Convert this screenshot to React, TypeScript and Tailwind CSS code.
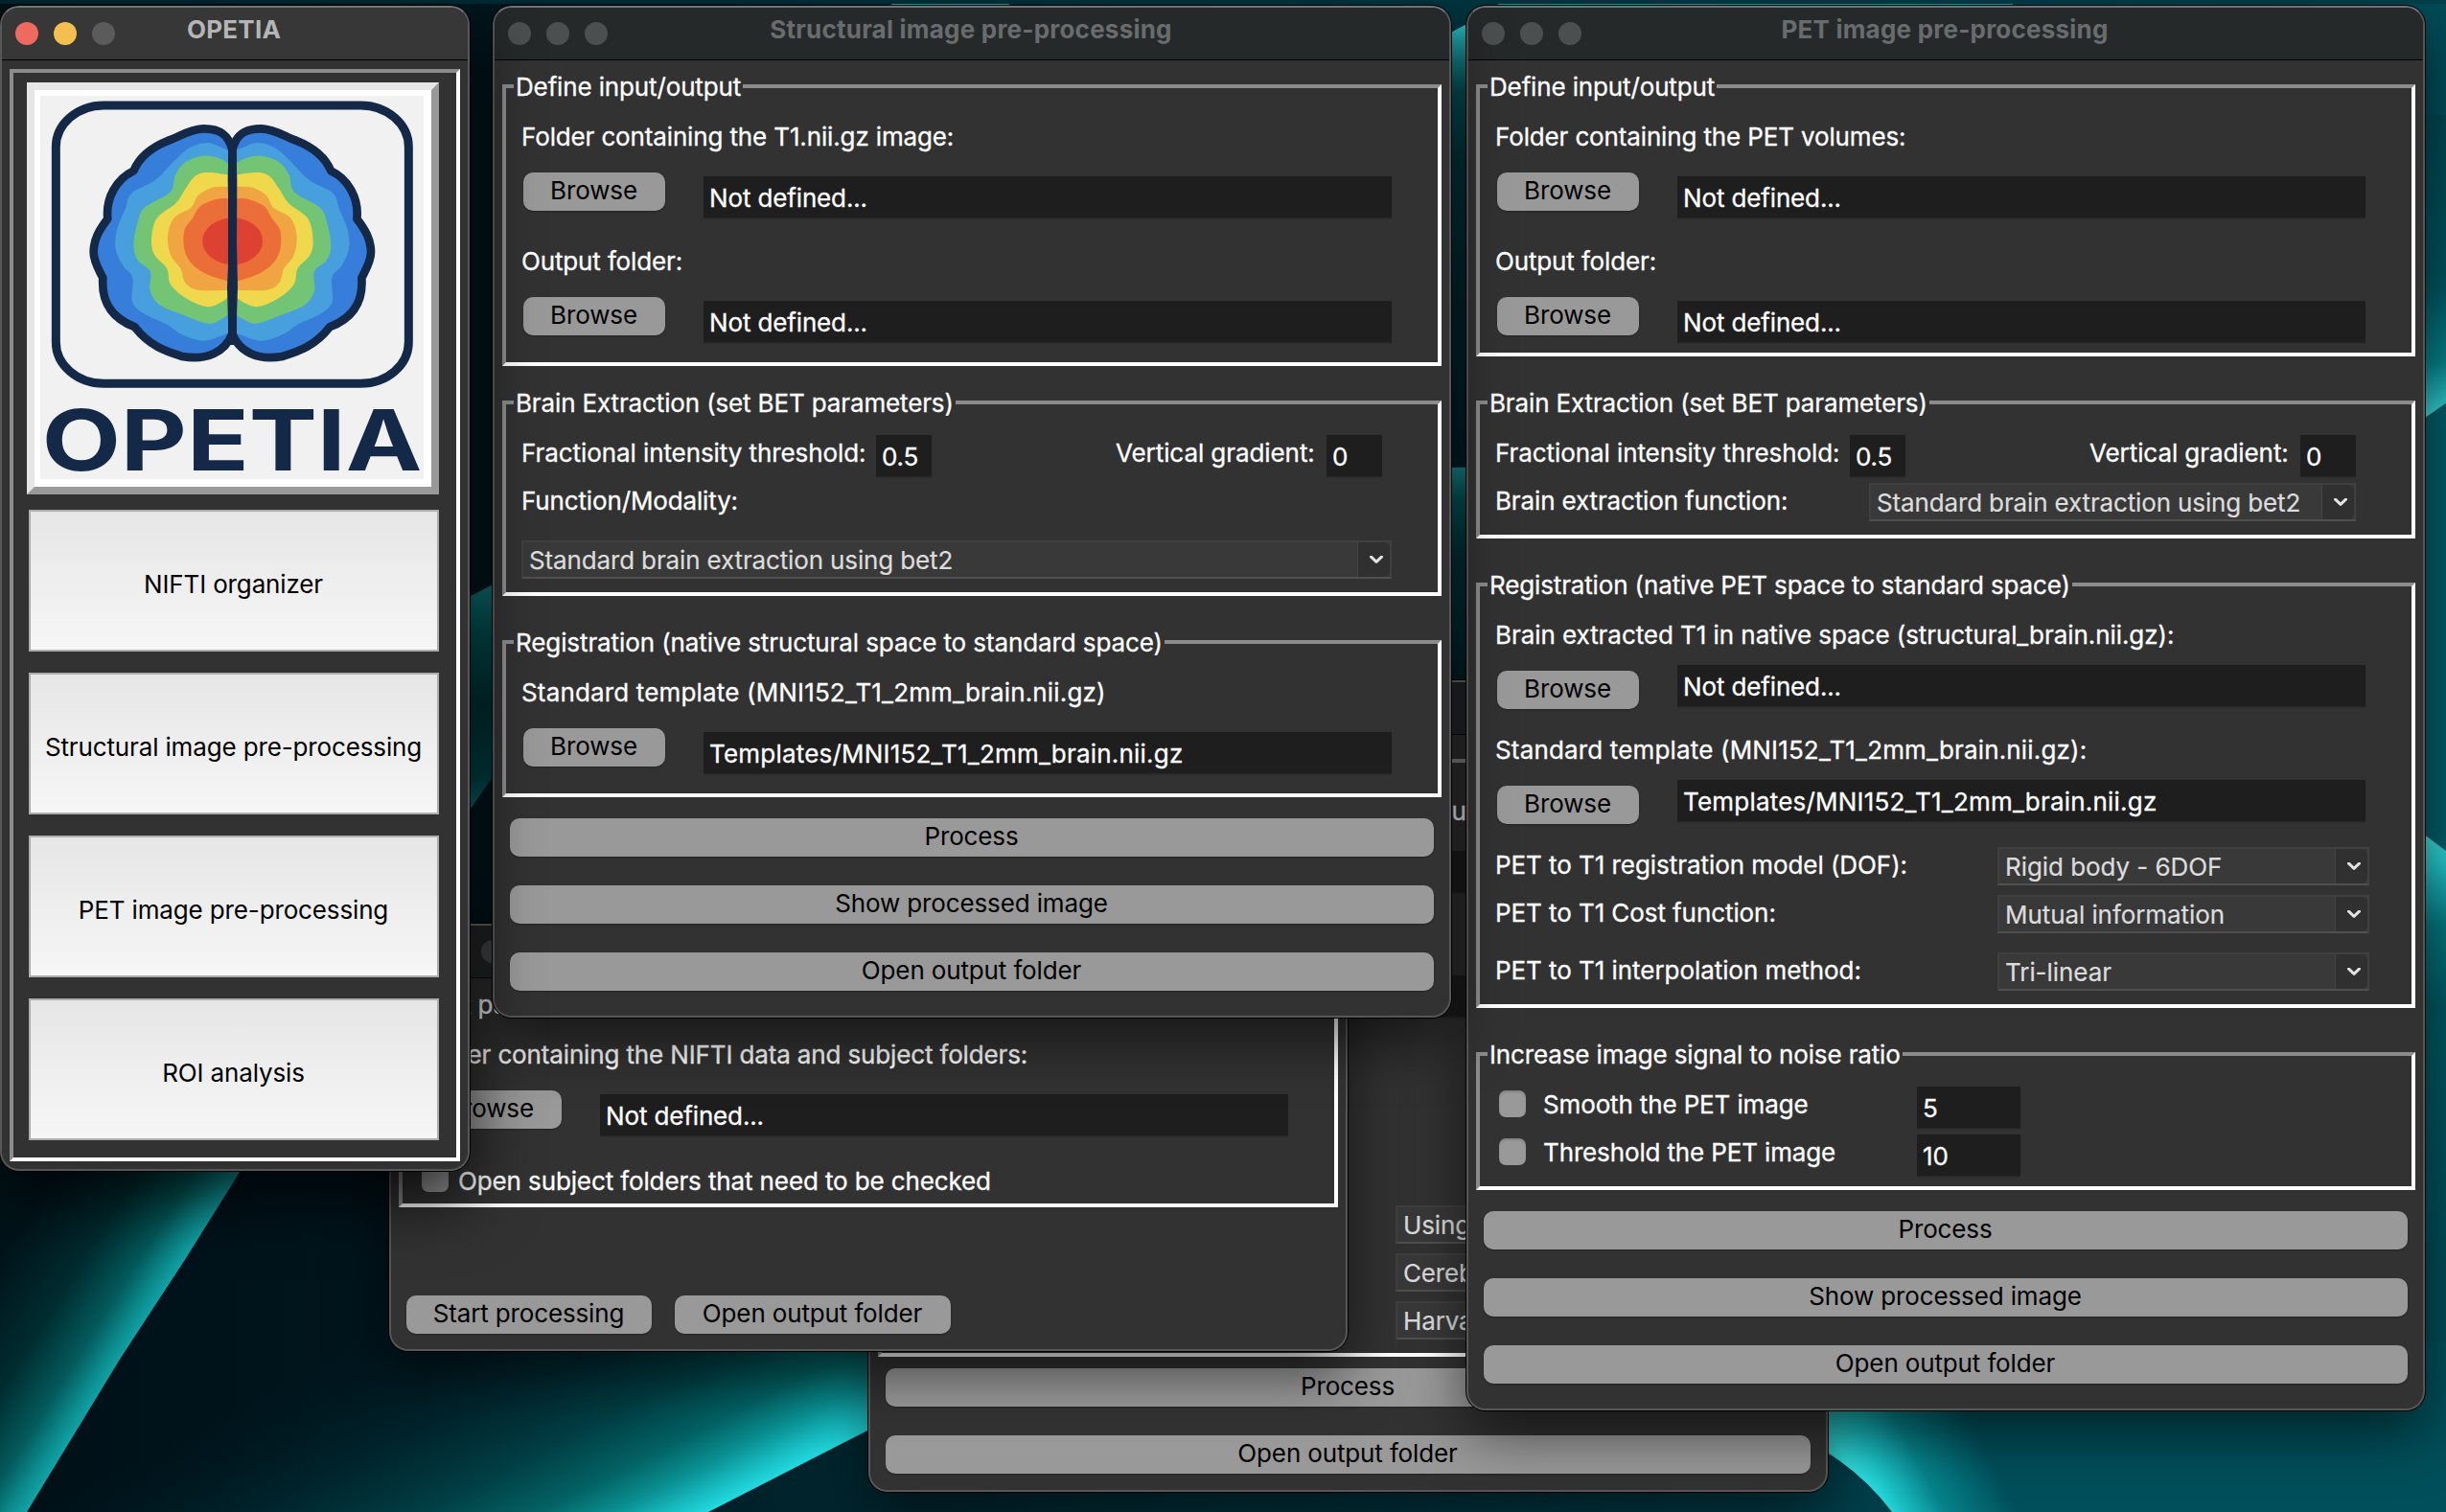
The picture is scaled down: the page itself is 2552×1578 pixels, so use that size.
import type { ReactNode } from "react";

type Pt = [number, number];

/* ---------- Logo ---------- */

const AXIS = 727;

/** Left-half contour points mirrored about the axis and joined by a Catmull-Rom curve. */
function contour(left: Pt[]): string {
  const right = left.map(([x, y]) => [2 * AXIS - x, y] as Pt).reverse();
  const p = [...left, ...right];
  const n = p.length;
  let d = `M${p[0][0]} ${p[0][1]}`;
  for (let i = 0; i < n; i++) {
    const a = p[(i - 1 + n) % n];
    const b = p[i];
    const c = p[(i + 1) % n];
    const e = p[(i + 2) % n];
    d += `C${b[0] + (c[0] - a[0]) / 6} ${b[1] + (c[1] - a[1]) / 6} ${c[0] - (e[0] - b[0]) / 6} ${c[1] - (e[1] - b[1]) / 6} ${c[0]} ${c[1]}`;
  }
  return d + "Z";
}

const LAYERS: { fill: string; points: Pt[] }[] = [
  { fill: "#479fdd", points: [[715, 470], [650, 447], [590, 465], [545, 505], [485, 565], [412, 605], [392, 655], [366, 720], [362, 780], [385, 832], [415, 870], [414, 945], [450, 982], [520, 1015], [570, 1048], [640, 1067], [712, 1045]] },
  { fill: "#74c476", points: [[720, 515], [690, 497], [635, 488], [580, 508], [549, 548], [532, 602], [452, 650], [430, 700], [418, 770], [432, 815], [470, 850], [470, 910], [500, 955], [570, 985], [650, 1013], [695, 998], [720, 980]] },
  { fill: "#efd84b", points: [[720, 548], [650, 540], [610, 552], [580, 592], [550, 637], [490, 685], [474, 755], [485, 800], [522, 840], [534, 890], [580, 932], [645, 960], [690, 948], [720, 928]] },
  { fill: "#f0a442", points: [[720, 584], [665, 587], [620, 612], [598, 650], [545, 682], [525, 740], [535, 800], [565, 840], [580, 885], [620, 908], [720, 908]] },
  { fill: "#eb6d37", points: [[720, 622], [680, 623], [628, 645], [603, 683], [577, 722], [578, 785], [605, 830], [655, 862], [720, 882]] },
];

const HEMI =
  "M727 470C715 415 680 402 635 403C590 405 560 430 525 441C465 465 435 495 418 535C365 560 330 620 337 685C310 720 293 750 293 790C293 820 310 845 322 870C318 930 335 990 422 1024C470 1085 520 1100 570 1116C650 1130 705 1100 727 1045Z";

function Logo() {
  return (
    <svg viewBox="126 300 1200 1200" className="block size-[400px] overflow-visible bg-[#f1f1f1]">
      <rect x="175" y="330" width="1104" height="871" rx="150" ry="130" fill="none" stroke="#142848" strokeWidth="27" />
      {["", "matrix(-1 0 0 1 1454 0)"].map((t) => (
        <path key={t} d={HEMI} transform={t} fill="#377edb" />
      ))}
      {LAYERS.map((l) => (
        <path key={l.fill} d={contour(l.points)} fill={l.fill} />
      ))}
      <ellipse cx="728" cy="755" rx="94" ry="73" fill="#dc4132" />
      {["", "matrix(-1 0 0 1 1454 0)"].map((t) => (
        <path key={t} d={HEMI} transform={t} fill="none" stroke="#142848" strokeWidth="26" strokeLinejoin="round" />
      ))}
      <path d="M716 440H738L742 560L741 760L744 900L738 1080H716L711 900L717 760L713 560Z" fill="#142848" />
      <text x="131" y="1474" textLength="1190" lengthAdjust="spacingAndGlyphs" fontSize="264" fontWeight="700" fill="#142848" className="font-['Inter',sans-serif]">
        OPETIA
      </text>
    </svg>
  );
}

/* ---------- Wallpaper ---------- */

function Wallpaper() {
  return (
    <svg className="absolute inset-0 size-full" viewBox="0 0 2552 1578" preserveAspectRatio="none">
      <defs>
        <linearGradient id="base" x1="0" y1="0" x2="1" y2="0">
          <stop offset="0" stopColor="#001017" />
          <stop offset=".22" stopColor="#001820" />
          <stop offset=".36" stopColor="#002730" />
          <stop offset=".58" stopColor="#003540" />
          <stop offset="1" stopColor="#004c58" />
        </linearGradient>
        <linearGradient id="menu" x1="0" y1="0" x2="1" y2="0">
          <stop offset="0" stopColor="#00262f" />
          <stop offset="1" stopColor="#00424c" />
        </linearGradient>
        <linearGradient id="leftGlow" gradientUnits="userSpaceOnUse" x1="140" y1="1400" x2="0" y2="1312">
          <stop offset="0" stopColor="#12a5a8" />
          <stop offset=".1" stopColor="#0b8a8c" />
          <stop offset=".25" stopColor="#045a5c" />
          <stop offset=".55" stopColor="#002c30" />
          <stop offset="1" stopColor="#00141a" />
        </linearGradient>
        <linearGradient id="midGlow" gradientUnits="userSpaceOnUse" x1="822" y1="1536" x2="674" y2="1247">
          <stop offset="0" stopColor="#22dbe0" />
          <stop offset=".06" stopColor="#17bcc1" />
          <stop offset=".14" stopColor="#0a9092" />
          <stop offset=".25" stopColor="#036264" />
          <stop offset=".42" stopColor="#003f44" />
          <stop offset=".65" stopColor="#002830" stopOpacity=".85" />
          <stop offset="1" stopColor="#001820" stopOpacity="0" />
        </linearGradient>
        <linearGradient id="rightGlow" gradientUnits="userSpaceOnUse" x1="1940" y1="1552" x2="2060" y2="1490">
          <stop offset="0" stopColor="#35f2f2" />
          <stop offset=".2" stopColor="#1cc4c8" />
          <stop offset=".5" stopColor="#06828a" />
          <stop offset="1" stopColor="#004f5a" />
        </linearGradient>
        <linearGradient id="gapLeft" x1="0" y1="0" x2="0" y2="1">
          <stop offset="0" stopColor="#138488" />
          <stop offset=".2" stopColor="#005a5a" />
          <stop offset=".5" stopColor="#003436" />
          <stop offset=".8" stopColor="#00474c" />
          <stop offset="1" stopColor="#12868e" />
        </linearGradient>
        <linearGradient id="gapMidA" x1="0" y1="0" x2="0" y2="1">
          <stop offset="0" stopColor="#2bd0d4" />
          <stop offset=".07" stopColor="#1a9da4" />
          <stop offset=".16" stopColor="#00585e" />
          <stop offset=".3" stopColor="#003a42" />
          <stop offset=".6" stopColor="#002a31" />
          <stop offset="1" stopColor="#002027" />
        </linearGradient>
        <linearGradient id="gapMidB" x1="0" y1="0" x2="0" y2="1">
          <stop offset="0" stopColor="#17959b" />
          <stop offset=".15" stopColor="#04595c" />
          <stop offset=".4" stopColor="#00363c" />
          <stop offset="1" stopColor="#00242b" />
        </linearGradient>
        <linearGradient id="edgeR1" x1="0" y1="0" x2="0" y2="1">
          <stop offset="0" stopColor="#004650" />
          <stop offset=".55" stopColor="#00545e" />
          <stop offset=".8" stopColor="#058088" />
          <stop offset="1" stopColor="#40e6e6" />
        </linearGradient>
        <linearGradient id="edgeR2" x1="0" y1="0" x2="0" y2="1">
          <stop offset="0" stopColor="#3fe0dd" />
          <stop offset=".08" stopColor="#22c4c8" />
          <stop offset=".22" stopColor="#04767e" />
          <stop offset=".4" stopColor="#005660" />
          <stop offset="1" stopColor="#004c58" />
        </linearGradient>
      </defs>
      <rect width="2552" height="1578" fill="url(#base)" />
      <path d="M0 1180H277L194 1313L126 1417L28 1578H0Z" fill="url(#leftGlow)" />
      <path d="M29 1578L240 1240H1000V1445L905 1493L739 1578Z" fill="url(#midGlow)" />
      <path d="M1850 1400H2552V1578H1974Q1944 1538 1900 1512L1850 1480Z" fill="url(#rightGlow)" />
      <path d="M480 628L520 607V802L480 860Z" fill="url(#gapLeft)" />
      <path d="M1510 36L1534 23V487H1510Z" fill="url(#gapMidA)" />
      <path d="M1510 488H1534V720H1510Z" fill="url(#gapMidB)" />
      <path d="M2520 120H2552V421L2520 443Z" fill="url(#edgeR1)" />
      <path d="M2520 443L2552 421V888L2520 864Z" fill="#005b66" />
      <path d="M2520 864L2552 888V1330H2520Z" fill="url(#edgeR2)" />
      <rect width="2552" height="4" fill="url(#menu)" />
      <path d="M930 4.5H1053M1563 4.5H2100" stroke="#1aa3ad" strokeWidth="1" />
    </svg>
  );
}

/* ---------- Window parts ---------- */

function Win({ title, place, active, children }: { title?: string; place: string; active?: boolean; children: ReactNode }) {
  return (
    <section
      className={`absolute flex flex-col overflow-hidden rounded-[20px] border-2 border-[#575757] border-t-[#70757a] bg-[#323232] ${place} ${
        active
          ? "shadow-[0_0_0_1px_#000,0_30px_70px_rgba(0,0,0,.75)]"
          : "shadow-[0_0_0_1px_#000,0_24px_60px_rgba(0,0,0,.55)]"
      }`}
    >
      <header className={`relative flex h-[55px] shrink-0 items-center gap-4 border-b border-black px-[14px] pb-px ${active ? "bg-[#363736]" : "bg-[#26292a]"}`}>
        <i className={`size-6 rounded-full ${active ? "bg-[#ee6a5f]" : "bg-[#4b4f4f]"}`} />
        <i className={`size-6 rounded-full ${active ? "bg-[#f5bf4f]" : "bg-[#4b4f4f]"}`} />
        <i className={`size-6 rounded-full ${active ? "bg-[#5a5b5a]" : "bg-[#4b4f4f]"}`} />
        {title && (
          <h2 className={`absolute inset-x-0 top-[7px] pr-[2px] text-center font-bold leading-8 tracking-[0.22px] ${active ? "text-[#b4b5b4]" : "text-[#696c6d]"}`}>
            {title}
          </h2>
        )}
      </header>
      {children}
    </section>
  );
}

function Group({ title, className, children }: { title?: string; className: string; children: ReactNode }) {
  return (
    <fieldset className={`mx-2 min-w-0 shrink-0 border-4 border-y-white border-r-white border-l-[#8c8c8c] border-t-[#8c8c8c] ${className}`}>
      <legend className="ml-2 h-8 px-[2px] leading-[34px] text-white [-webkit-text-stroke:0.3px_#fff]">{title}</legend>
      {children}
    </fieldset>
  );
}

function Label({ children, className = "" }: { children: ReactNode; className?: string }) {
  return <div className={`h-8 whitespace-nowrap pl-4 leading-[34px] text-white [-webkit-text-stroke:0.3px_#fff] ${className}`}>{children}</div>;
}

function Push({ children, className = "" }: { children: ReactNode; className?: string }) {
  return (
    <button className={`flex h-10 shrink-0 items-center justify-center whitespace-nowrap rounded-[10px] bg-[#999] pb-[3px] pr-px text-black shadow-[0_1px_2px_rgba(0,0,0,.3)] ${className}`}>
      {children}
    </button>
  );
}

function Entry({ value, className = "" }: { value: string; className?: string }) {
  return (
    <div className={`h-11 shrink-0 whitespace-nowrap border-b border-[#262626] bg-[#1e1e1e] pl-[6px] leading-[46px] text-white shadow-[0_1px_0_#2d2d2d] [-webkit-text-stroke:0.3px_#fff] ${className}`}>
      {value}
    </div>
  );
}

function Combo({ value, className = "" }: { value: string; className?: string }) {
  return (
    <div className={`flex h-10 shrink-0 items-stretch border-2 border-[#404040] border-b-[#505050] bg-[#393939] text-[#dcdcdc] ${className}`}>
      <span className="grow whitespace-nowrap pl-[6px] leading-[38px] [-webkit-text-stroke:0.2px_#dcdcdc]">{value}</span>
      <span className="flex w-[34px] items-center justify-center rounded-r-md border-l border-[#434343] bg-[#303030] pl-1">
        <svg viewBox="0 0 14 8" className="h-2 w-[14px]" fill="none" stroke="#e2e2e2" strokeWidth="3" strokeLinecap="round" strokeLinejoin="round">
          <path d="M1.5 1.2L7 6.4L12.5 1.2" />
        </svg>
      </span>
    </div>
  );
}

function Check() {
  return <span className="block size-7 shrink-0 rounded-[7px] bg-[#999] shadow-[inset_0_2px_2px_rgba(0,0,0,.15)]" />;
}

/** Browse button with its path field; in a raised row the field starts above the button. */
function BrowseRow({ value, className, raised }: { value: string; className: string; raised?: boolean }) {
  return (
    <div className={`flex pl-[18px] ${className}`}>
      <Push className={raised ? "mt-1.5 w-[148px]" : "w-[148px]"}>Browse</Push>
      <Entry value={value} className={`ml-10 w-[718px] ${raised ? "" : "mt-1"} ${value.startsWith("Templates") ? "tracking-[0.2px]" : ""}`} />
    </div>
  );
}

function BetRow() {
  return (
    <div className="mt-[18px] flex">
      <Label className="mt-0.5 w-[386px] tracking-[-0.08px]">Fractional intensity threshold:</Label>
      <Entry value="0.5" className="w-[58px]" />
      <Label className="ml-[176px] mt-0.5 w-[236px] tracking-[-0.08px]">Vertical gradient:</Label>
      <Entry value="0" className="w-[58px]" />
    </div>
  );
}

/* ---------- Windows ---------- */

function RoiWindow() {
  return (
    <Win place="left-[906px] top-[710px] h-[847px] w-[1001px]">
      <Group className="mt-[11px] h-[638px]">
        <Label className="ml-[563px] mt-5">ou</Label>
        <Entry value="" className="ml-[206px] mt-[26px] w-[718px]" />
        <Entry value="" className="ml-[206px] mt-[86px] w-[718px]" />
        <Combo value="Using" className="ml-[536px] mt-[196px] w-[388px]" />
        <Combo value="Cerebellum" className="ml-[536px] mt-2.5 w-[388px]" />
        <Combo value="Harvard" className="ml-[536px] mt-2.5 w-[388px]" />
      </Group>
      <div className="mx-4 mt-3 flex flex-col gap-[30px]">
        <Push>Process</Push>
        <Push>Open output folder</Push>
      </div>
    </Win>
  );
}

function NiftiWindow() {
  return (
    <Win place="left-[406px] top-[964px] h-[446px] w-[1000px]">
      <Group title="Input path" className="mt-[11px] h-[228px]">
        <Label className="mt-5">Folder containing the NIFTI data and subject folders:</Label>
        <BrowseRow value="Not defined..." className="mt-[22px]" />
        <div className="mt-[30px] flex pl-5">
          <Check />
          <div className="-ml-1.5 tracking-[-0.12px]">
            <Label>Open subject folders that need to be checked</Label>
          </div>
        </div>
      </Group>
      <div className="ml-4 mt-[92px] flex gap-6">
        <Push className="w-64">Start processing</Push>
        <Push className="w-72">Open output folder</Push>
      </div>
    </Win>
  );
}

function PetWindow() {
  return (
    <Win title="PET image pre-processing" place="left-[1530px] top-[6px] h-[1466px] w-[1000px]">
      <Group title="Define input/output" className="mt-[11px] h-[298px]">
        <Label className="mt-5">Folder containing the PET volumes:</Label>
        <BrowseRow value="Not defined..." className="mt-[22px]" />
        <Label className="mt-7">Output folder:</Label>
        <BrowseRow value="Not defined..." className="mt-[22px]" />
      </Group>
      <Group title="Brain Extraction (set BET parameters)" className="mt-8 h-[158px]">
        <BetRow />
        <div className="mt-1.5 flex">
          <Label className="mt-0.5 w-[406px]">Brain extraction function:</Label>
          <Combo value="Standard brain extraction using bet2" className="w-[508px]" />
        </div>
      </Group>
      <Group title="Registration (native PET space to standard space)" className="mt-8 h-[458px]">
        <Label className="mt-5 tracking-[-0.06px]">Brain extracted T1 in native space (structural_brain.nii.gz):</Label>
        <BrowseRow value="Not defined..." className="mt-4" raised />
        <Label className="mt-[26px] tracking-[0.16px]">Standard template (MNI152_T1_2mm_brain.nii.gz):</Label>
        <BrowseRow value="Templates/MNI152_T1_2mm_brain.nii.gz" className="mt-4" raised />
        <div className="mt-6 flex tracking-[-0.06px]">
          <Label className="mt-0.5 w-[540px]">PET to T1 registration model (DOF):</Label>
          <Combo value="Rigid body - 6DOF" className="w-[388px]" />
        </div>
        <div className="mt-2.5 flex tracking-[-0.08px]">
          <Label className="mt-0.5 w-[540px]">PET to T1 Cost function:</Label>
          <Combo value="Mutual information" className="w-[388px]" />
        </div>
        <div className="mt-5 flex tracking-[-0.06px]">
          <Label className="mt-0.5 w-[540px]">PET to T1 interpolation method:</Label>
          <Combo value="Tri-linear" className="w-[388px]" />
        </div>
      </Group>
      <Group title="Increase image signal to noise ratio" className="mt-8 h-[158px]">
        <div className="mt-[18px] grid gap-1.5 pl-5">
          {[
            ["Smooth the PET image", "5"],
            ["Threshold the PET image", "10"],
          ].map(([name, value]) => (
            <div key={name} className="flex">
              <div className="mt-1">
                <Check />
              </div>
              <Label className="ml-0.5 mt-0.5 w-[406px]">{name}</Label>
              <Entry value={value} className="w-[108px]" />
            </div>
          ))}
        </div>
      </Group>
      <div className="mx-4 mt-[22px] flex flex-col gap-[30px]">
        <Push>Process</Push>
        <Push>Show processed image</Push>
        <Push>Open output folder</Push>
      </div>
    </Win>
  );
}

function StructuralWindow() {
  return (
    <Win title="Structural image pre-processing" place="left-[514px] top-[6px] h-[1056px] w-[1000px]">
      <Group title="Define input/output" className="mt-[11px] h-[308px]">
        <Label className="mt-5">Folder containing the T1.nii.gz image:</Label>
        <BrowseRow value="Not defined..." className="mt-[22px]" />
        <Label className="mt-7">Output folder:</Label>
        <BrowseRow value="Not defined..." className="mt-[22px]" />
      </Group>
      <Group title="Brain Extraction (set BET parameters)" className="mt-[22px] h-[218px]">
        <BetRow />
        <Label className="mt-2">Function/Modality:</Label>
        <Combo value="Standard brain extraction using bet2" className="ml-4 mt-[26px] w-[908px]" />
      </Group>
      <Group title="Registration (native structural space to standard space)" className="mt-8 h-[178px] tracking-[-0.1px]">
        <Label className="mt-5 tracking-[0.16px]">Standard template (MNI152_T1_2mm_brain.nii.gz)</Label>
        <BrowseRow value="Templates/MNI152_T1_2mm_brain.nii.gz" className="mt-[22px]" />
      </Group>
      <div className="mx-4 mt-[22px] flex flex-col gap-[30px]">
        <Push>Process</Push>
        <Push>Show processed image</Push>
        <Push>Open output folder</Push>
      </div>
    </Win>
  );
}

function MainWindow() {
  return (
    <Win active title="OPETIA" place="left-0 top-[6px] h-[1216px] w-[490px]">
      <div className="ml-2 mt-[9px] flex h-[1140px] w-[470px] flex-col border-4 border-b-white border-l-[#8c8c8c] border-r-white border-t-[#8c8c8c] pl-[14px] pt-[10px]">
        <div className="w-[430px] border-8 border-b-[#999] border-l-[#e6e6e6] border-r-[#999] border-t-[#e6e6e6] bg-white px-[6px] pb-2 pt-[6px]">
          <div className="w-[400px]">
            <Logo />
          </div>
        </div>
        <nav className="ml-0.5 mt-4 flex w-[428px] flex-col gap-[22px]">
          {["NIFTI organizer", "Structural image pre-processing", "PET image pre-processing", "ROI analysis"].map((t) => (
            <button key={t} className="flex h-[148px] items-center justify-center border-2 border-[#adadad] bg-linear-to-b from-[#e6e6e6] to-[#f6f6f6] pr-px pt-[6px] text-black">
              {t}
            </button>
          ))}
        </nav>
      </div>
    </Win>
  );
}

export default function App() {
  return (
    <main className="relative h-[1578px] w-[2552px] overflow-hidden bg-[#00161d] font-['Inter','Liberation_Sans',sans-serif] text-[26px] tracking-[-0.14px]">
      <Wallpaper />
      <RoiWindow />
      <NiftiWindow />
      <PetWindow />
      <StructuralWindow />
      <MainWindow />
    </main>
  );
}
